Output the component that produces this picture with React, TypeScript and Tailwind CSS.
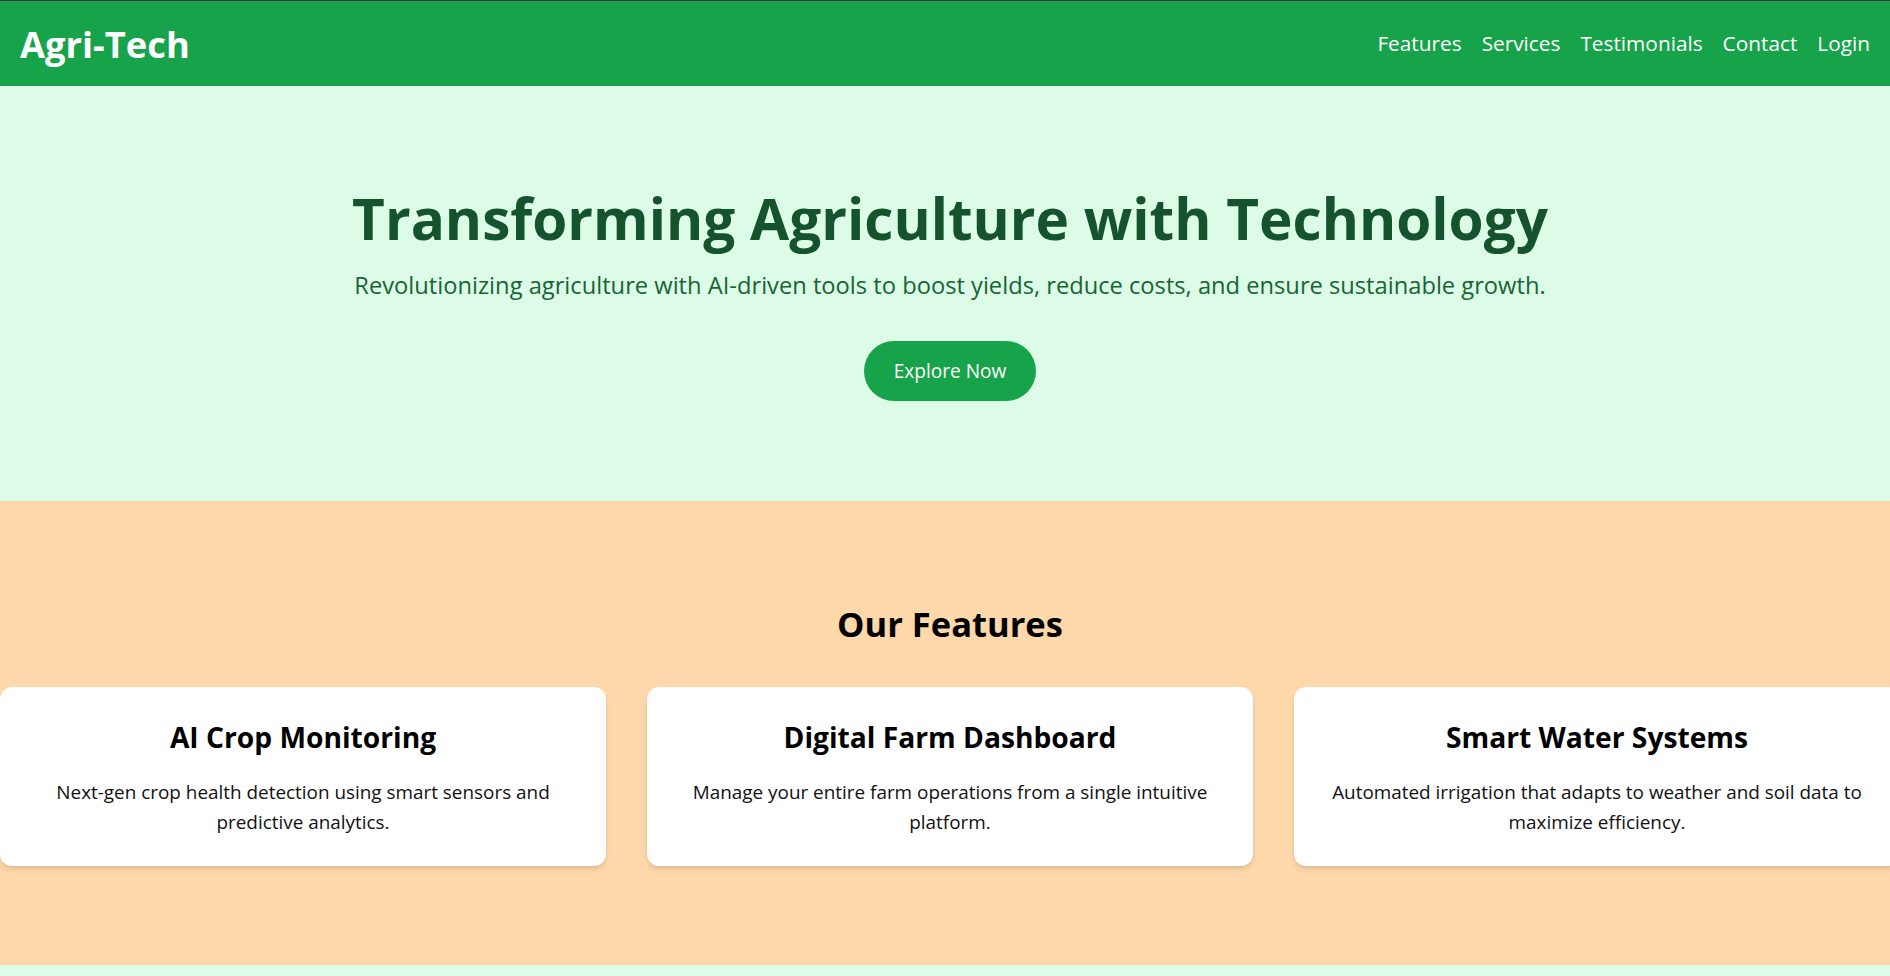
import React from "react";

const features = [
  {
    title: "AI Crop Monitoring",
    desc: "Next-gen crop health detection using smart sensors and predictive analytics.",
  },
  {
    title: "Digital Farm Dashboard",
    desc: "Manage your entire farm operations from a single intuitive platform.",
  },
  {
    title: "Smart Water Systems",
    desc: "Automated irrigation that adapts to weather and soil data to maximize efficiency.",
  },
];

export default function App() {
  return (
    <div
      className="w-full min-h-[976px] bg-[#dcfce7] overflow-hidden"
      style={{ fontFamily: '"Open Sans", "Noto Sans", sans-serif' }}
    >
      <header className="flex h-[86px] w-full items-center justify-between border-t border-[#3a3a3a] bg-[#16a34a] px-5 text-white">
        <div className="text-[36.3px] font-bold leading-10">Agri-Tech</div>
        <nav className="flex items-center gap-5 text-[20.8px]">
          <a>Features</a>
          <a>Services</a>
          <a>Testimonials</a>
          <a>Contact</a>
          <a>Login</a>
        </nav>
      </header>

      <section className="flex w-[1900px] flex-col items-center bg-[#dcfce7] pt-[104px] pb-[100px] text-center">
        <h1 className="h-[57px] text-[56.7px] font-bold leading-none text-[#14532d]">
          Transforming Agriculture with Technology
        </h1>
        <p className="mt-[22px] text-[23.7px] leading-8 text-[#166534]">
          Revolutionizing agriculture with AI-driven tools to boost yields, reduce costs, and ensure sustainable growth.
        </p>
        <button className="mt-10 flex h-[60px] items-center rounded-full bg-[#16a34a] px-[30px] text-[19.1px] text-white">
          Explore Now
        </button>
      </section>

      <section className="w-[1900px] bg-[#fed7aa] pt-[103px] pb-[99px]">
        <h2 className="text-center text-[34.5px] font-bold leading-10 text-black">Our Features</h2>
        <div className="mt-[43px] grid w-[1900px] grid-cols-[606px_606px_606px] gap-[41px]">
          {features.map((f) => (
            <div
              key={f.title}
              className="h-[179px] rounded-xl bg-white px-8 pt-[34px] pb-[30px] text-center shadow-md"
            >
              <h3 className="text-[28.2px] font-bold leading-8 text-black">{f.title}</h3>
              <p className="mt-6 text-[18.9px] leading-[30px] text-[#111]">{f.desc}</p>
            </div>
          ))}
        </div>
      </section>
      <div className="h-[11px] w-[1900px] bg-[#dcfce7]" />
    </div>
  );
}
